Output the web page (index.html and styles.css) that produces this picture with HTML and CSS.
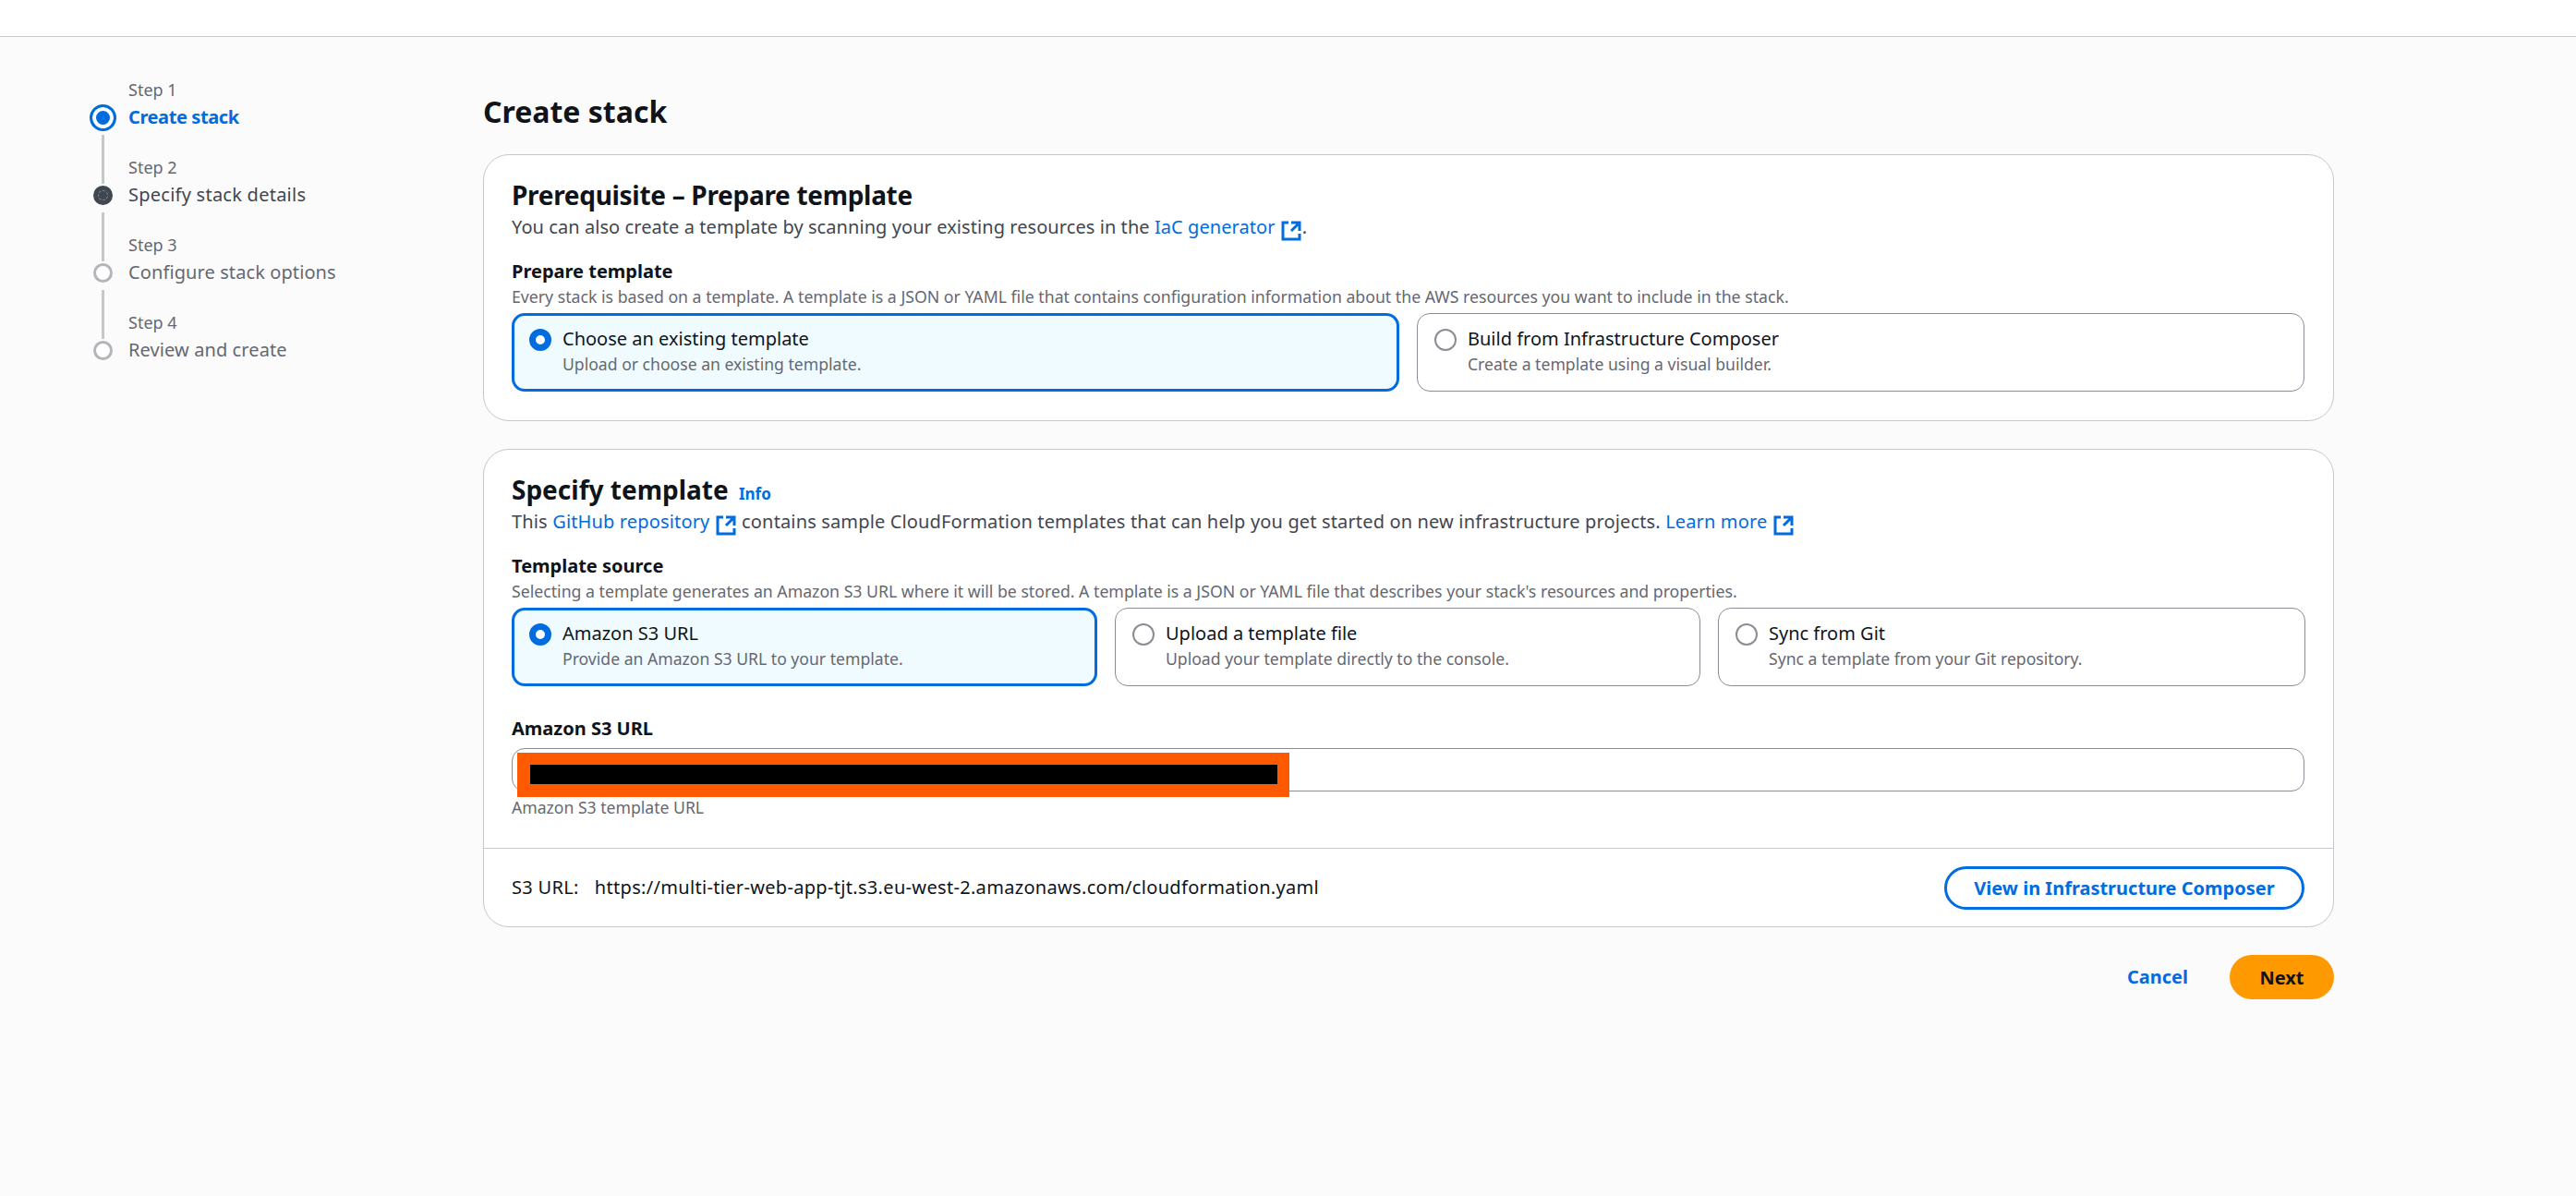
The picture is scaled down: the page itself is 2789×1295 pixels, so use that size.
FILE: index.html
```html
<!DOCTYPE html>
<html lang="en">
  <head>
    <meta charset="UTF-8" />
    <title>Create stack</title>
    <link rel="stylesheet" href="styles.css">
  </head>
  <body>
    <div class="topbar"></div>
    <div class="page">
      <nav class="steps">
        <div class="step step-active">
          <div class="step-label">Step 1</div>
          <div class="step-title"><span class="dot"></span>Create stack</div>
        </div>
        <div class="step step-next">
          <div class="step-label">Step 2</div>
          <div class="step-title"><span class="dot"></span>Specify stack details</div>
        </div>
        <div class="step">
          <div class="step-label">Step 3</div>
          <div class="step-title"><span class="dot"></span>Configure stack options</div>
        </div>
        <div class="step">
          <div class="step-label">Step 4</div>
          <div class="step-title"><span class="dot"></span>Review and create</div>
        </div>
      </nav>

      <main class="content">
        <h1>Create stack</h1>

        <section class="card">
          <div class="card-body">
            <h2 class="h2-tight">Prerequisite – Prepare template</h2>
            <p class="card-sub">You can also create a template by scanning your existing resources in the <a href="#">IaC generator <svg class="ext" viewBox="0 0 16 16"><path d="M14 8.01v-6H8M14.02 2 8 8.01M6 2.01H2v12h12v-3.99"/></svg></a>.</p>
            <div class="field-label">Prepare template</div>
            <div class="field-desc">Every stack is based on a template. A template is a JSON or YAML file that contains configuration information about the AWS resources you want to include in the stack.</div>
            <div class="tiles tiles-2">
              <label class="tile selected">
                <span class="radio"></span>
                <span class="tile-title">Choose an existing template</span>
                <span class="tile-sub">Upload or choose an existing template.</span>
              </label>
              <label class="tile">
                <span class="radio"></span>
                <span class="tile-title">Build from Infrastructure Composer</span>
                <span class="tile-sub">Create a template using a visual builder.</span>
              </label>
            </div>
          </div>
        </section>

        <section class="card">
          <div class="card-body">
            <h2>Specify template <a class="info" href="#">Info</a></h2>
            <p class="card-sub card-sub-wide">This <a href="#">GitHub repository <svg class="ext" viewBox="0 0 16 16"><path d="M14 8.01v-6H8M14.02 2 8 8.01M6 2.01H2v12h12v-3.99"/></svg></a> contains sample CloudFormation templates that can help you get started on new infrastructure projects. <a href="#">Learn more <svg class="ext" viewBox="0 0 16 16"><path d="M14 8.01v-6H8M14.02 2 8 8.01M6 2.01H2v12h12v-3.99"/></svg></a></p>
            <div class="field-label">Template source</div>
            <div class="field-desc">Selecting a template generates an Amazon S3 URL where it will be stored. A template is a JSON or YAML file that describes your stack's resources and properties.</div>
            <div class="tiles tiles-3">
              <label class="tile selected">
                <span class="radio"></span>
                <span class="tile-title">Amazon S3 URL</span>
                <span class="tile-sub">Provide an Amazon S3 URL to your template.</span>
              </label>
              <label class="tile">
                <span class="radio"></span>
                <span class="tile-title">Upload a template file</span>
                <span class="tile-sub">Upload your template directly to the console.</span>
              </label>
              <label class="tile">
                <span class="radio"></span>
                <span class="tile-title">Sync from Git</span>
                <span class="tile-sub">Sync a template from your Git repository.</span>
              </label>
            </div>
            <div class="field-label url-label">Amazon S3 URL</div>
            <div class="url-input">
              <div class="redact"><div class="redact-bar"></div></div>
            </div>
            <div class="field-help">Amazon S3 template URL</div>
          </div>
          <div class="card-foot">
            <div class="s3-url"><span class="s3-key">S3 URL:</span>https://multi-tier-web-app-tjt.s3.eu-west-2.amazonaws.com/cloudformation.yaml</div>
            <button class="btn-outline">View in Infrastructure Composer</button>
          </div>
        </section>

        <div class="actions">
          <a class="cancel" href="#">Cancel</a>
          <button class="btn-next">Next</button>
        </div>
      </main>
    </div>
  </body>
</html>
```

FILE: styles.css
```css
/* General */
body {
  margin: 0;
  background: #fbfbfb;
  color: #0f141a;
  font-family: "Noto Sans", Arial, sans-serif;
  font-size: 20px;
  line-height: 30px;
  min-height: 1295px;
  box-sizing: border-box;
}

a {
  color: #006ce0;
  text-decoration: none;
}

.topbar {
  height: 39px;
  background: #fff;
  border-bottom: 1px solid #c6c6cd;
}

.page {
  display: flex;
}

/* Left steps */
.steps {
  width: 523px;
  flex: none;
  box-sizing: border-box;
  padding: 42px 0 0 139px;
}

.step {
  position: relative;
  height: 84px;
}

.step-label {
  font-size: 18px;
  color: #656871;
}

.step-title {
  position: relative;
  color: #656871;
  letter-spacing: 0.1px;
}

.dot {
  position: absolute;
  left: -38px;
  top: 5px;
  width: 21px;
  height: 21px;
  box-sizing: border-box;
  border: 3px solid #b4b4bb;
  border-radius: 50%;
  background: #fff;
}

/* connector line down to the next step */
.step:not(:last-child)::after {
  content: "";
  position: absolute;
  left: -29px;
  top: 64px;
  width: 3px;
  height: 53px;
  background: #c6c6cd;
}

.step-active .step-title {
  color: #006ce0;
  font-weight: 700;
  letter-spacing: -0.4px;
}

.step-active .dot {
  left: -42px;
  top: 1px;
  width: 29px;
  height: 29px;
  border: 3px solid #006ce0;
  background: #006ce0;
  box-shadow: inset 0 0 0 4px #fff;
}

.step-next .step-title {
  color: #424650;
  letter-spacing: 0.25px;
}

.step-next .dot {
  background: #424650;
  border-color: #424650;
  outline: 1px dashed #7d8998;
  outline-offset: -6px;
}

/* Main column */
.content {
  width: 2004px;
  flex: none;
  padding-top: 59px;
}

h1 {
  margin: 0 0 24px;
  font-size: 32px;
  line-height: 44px;
  font-weight: 700;
}

.card {
  background: #fff;
  border: 1px solid #c6c6cd;
  border-radius: 28px;
  margin-bottom: 30px;
}

.card-body {
  padding: 26px 31px 31px 30px;
}

h2 {
  margin: 0;
  font-size: 28px;
  line-height: 34px;
  font-weight: 700;
}

.h2-tight {
  letter-spacing: -0.3px;
}

.info {
  font-size: 17px;
  line-height: 1;
  font-weight: 700;
  margin-left: 4px;
}

.card-sub {
  margin: 1px 0 0;
  line-height: 34px;
  color: #424650;
  letter-spacing: 0.07px;
}

.card-sub-wide {
  letter-spacing: 0.15px;
}

/* external link icon, the drawn part is 12/16 of the box */
.ext {
  width: 24px;
  height: 24px;
  margin: -4px 0;
  vertical-align: -5px;
  fill: none;
  stroke: #006ce0;
  stroke-width: 2;
}

.field-label {
  margin-top: 17px;
  font-weight: 700;
  line-height: 28px;
}

.field-desc {
  font-size: 17.7px;
  line-height: 26px;
  color: #656871;
}

.tiles {
  display: grid;
  gap: 19px;
  margin-top: 5px;
}

.tiles-2 {
  grid-template-columns: 961px 961px;
}

.tiles-3 {
  grid-template-columns: 634px 634px 636px;
}

.tile {
  display: block;
  position: relative;
  height: 85px;
  box-sizing: border-box;
  padding: 13px 0 0 54px;
  border: 1px solid #8c8c94;
  border-radius: 14px;
}

.tile.selected {
  border: 3px solid #006ce0;
  background: #f0fbff;
  padding: 11px 0 0 52px;
}

.radio {
  position: absolute;
  left: 18px;
  top: 16px;
  width: 24px;
  height: 24px;
  box-sizing: border-box;
  border: 2px solid #8c8c94;
  border-radius: 50%;
  background: #fff;
}

.tile.selected .radio {
  left: 16px;
  top: 14px;
  border: 7px solid #006ce0;
}

.tile-title {
  display: block;
  line-height: 28px;
}

.tile-sub {
  display: block;
  font-size: 17.6px;
  line-height: 26px;
  color: #656871;
}

.url-label {
  margin-top: 32px;
}

.url-input {
  position: relative;
  height: 47px;
  margin-top: 7px;
  box-sizing: border-box;
  border: 1px solid #8c8c94;
  border-radius: 14px;
  background: #fff;
}

/* orange redaction painted over the input */
.redact {
  position: absolute;
  left: 5px;
  top: 4px;
  width: 836px;
  height: 48px;
  box-sizing: border-box;
  padding: 13px 13px 14px 14px;
  background: #ff5a00;
}

.redact-bar {
  height: 21px;
  background: #000;
}

.field-help {
  margin-top: 5px;
  font-size: 17.6px;
  line-height: 25px;
  color: #656871;
}

.card-foot {
  display: flex;
  justify-content: space-between;
  align-items: center;
  height: 84px;
  padding: 0 31px 0 30px;
  border-top: 1px solid #c6c6cd;
}

.s3-key {
  margin-right: 17px;
}

.s3-url {
  color: #0f141a;
  letter-spacing: 0.32px;
}

button {
  font-family: inherit;
  font-size: 20px;
  font-weight: 700;
  border-radius: 24px;
  cursor: pointer;
}

.btn-outline {
  width: 390px;
  height: 47px;
  padding: 0;
  border: 3px solid #006ce0;
  background: #fff;
  color: #006ce0;
}

.actions {
  display: flex;
  justify-content: flex-end;
  align-items: center;
  gap: 45px;
}

.cancel {
  font-weight: 700;
}

.btn-next {
  width: 113px;
  height: 48px;
  padding: 0;
  border: none;
  background: #ff9900;
  color: #0f141a;
}
```
